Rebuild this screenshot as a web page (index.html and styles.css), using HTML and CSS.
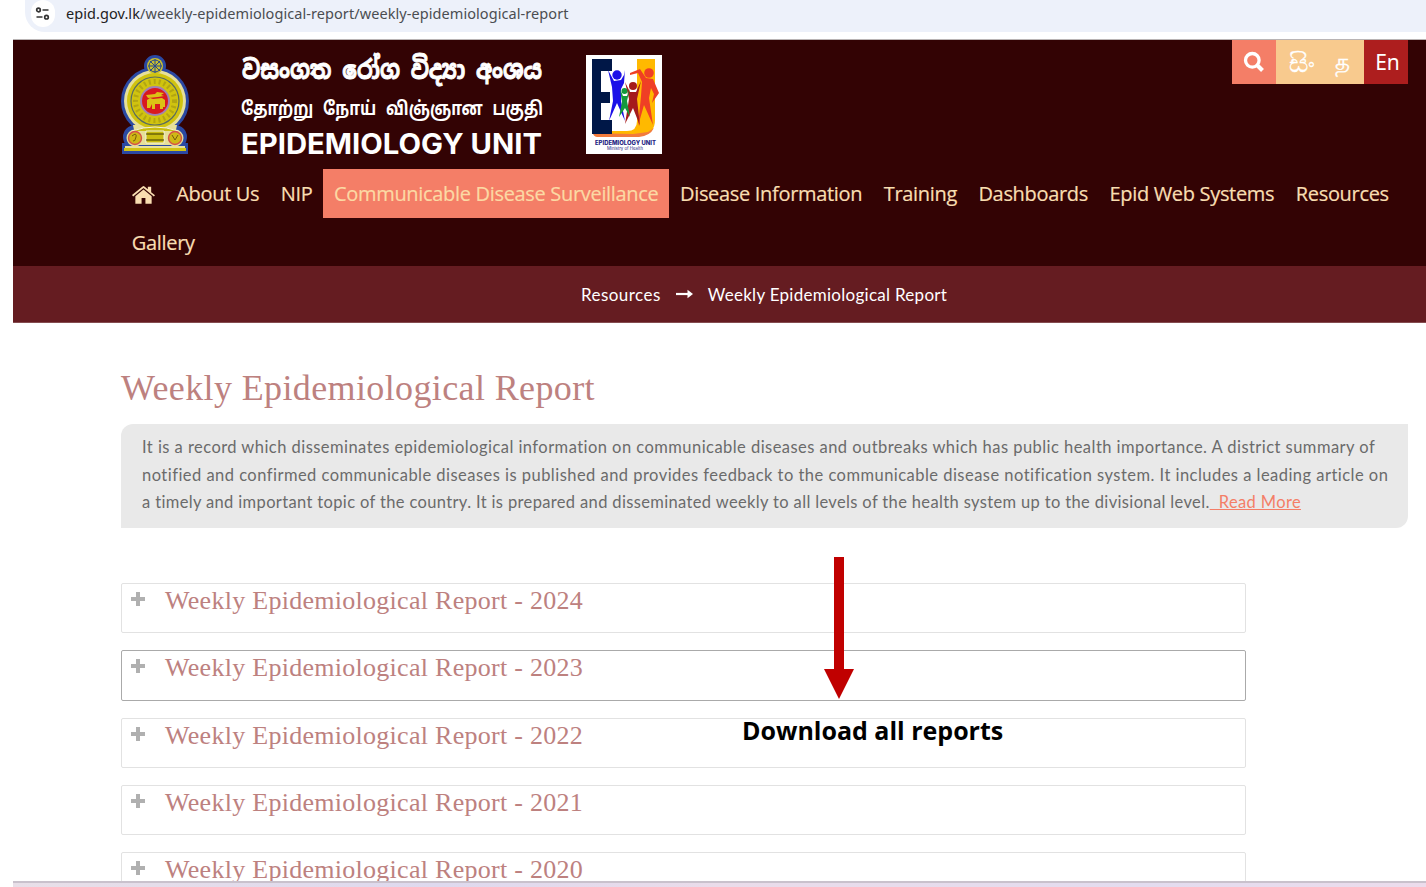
FILE: index.html
```html
<!DOCTYPE html>
<html lang="en">
<head>
<meta charset="utf-8">
<title>Weekly Epidemiological Report</title>
<link rel="stylesheet" href="styles.css">
</head>
<body>
<div class="browser-bar">
  <div class="address">
    <span class="site-info"><svg width="16" height="16" viewBox="0 0 16 16" fill="none" stroke="#333" stroke-width="1.7"><circle cx="3.500" cy="4" r="1.800"/><path d="M7.500 4h6M1.500 11h6"/><circle cx="11.500" cy="11.200" r="1.800"/></svg></span>
    <span class="url"><b>epid.gov.lk</b>/weekly-epidemiological-report/weekly-epidemiological-report</span>
  </div>
</div>
<div class="page">
  <header class="header">
    <div class="brand">
      <svg class="emblem" width="68" height="100" viewBox="0 0 68 100">
        <g fill="#2b49a3" stroke="#2b49a3" stroke-width="4"><circle cx="34" cy="11" r="9"/><circle cx="34" cy="46" r="32"/><circle cx="14" cy="82" r="10"/><circle cx="54" cy="82" r="10"/><path d="M3 90h62v7H3z"/></g>
        <g fill="#e6df9a"><circle cx="34" cy="46" r="31"/><path d="M12 70h44l-4 20H16z"/><circle cx="14" cy="83" r="8.5"/><circle cx="54" cy="83" r="8.5"/><path d="M4 91h60v4H4z"/></g>
        <circle cx="34" cy="11" r="8" fill="#c9bf2f"/><g fill="none" stroke="#274891"><circle cx="34" cy="11" r="6"/><path d="M34 4v14M27 11h14M29 6l10 10M39 6L29 16"/></g>
        <circle cx="34" cy="46" r="28" fill="#d0c30f"/>
        <g fill="none"><circle cx="34" cy="46" r="24" stroke="#596b62" stroke-width="1.2"/><circle cx="34" cy="46" r="19.500" stroke="#b3a611" stroke-width="5" stroke-dasharray="2 3"/></g>
        <circle cx="34" cy="46" r="14" fill="#d9191f" stroke="#a17fb5" stroke-width="2"/>
        <path d="M25 40l9-1 2-2 7 1-3 2 3 1-6 1-10 1zM26 45l3-2 3 1 9-1 3 2v7h-2v2h-3v-5h-5v5h-3v-5l-2 4h-3v-3z" fill="#dcc215"/>
        <path d="M11 76q23-8 46 0M25 76h18v12H25z" fill="#c9bc10" stroke="#f3f1dc"/>
        <path d="M25 79h18M25 85h18" stroke="#3c3705"/>
        <g fill="#cfb716" stroke="#d65048" stroke-width="1.4"><circle cx="14" cy="83" r="6.5"/><circle cx="54" cy="83" r="6.5"/></g>
        <path d="M11 81q5-4 4 1t-3 4M51 80l3 5 3-5" fill="none" stroke="#765d0b"/>
        <path d="M3 93h62v3H3z" fill="#d1c413"/>
      </svg>
      <svg class="brand-text" width="304" height="112" viewBox="0 0 304 112">
        <text class="sinhala" x="2" y="31" textLength="300" lengthAdjust="spacingAndGlyphs">වසංගත රෝග විද්‍යා අංශය</text>
        <text class="tamil" x="1" y="67" textLength="302" lengthAdjust="spacingAndGlyphs">தோற்று நோய் விஞ்ஞான பகுதி</text>
        <text class="english" x="1" y="106" textLength="301" lengthAdjust="spacingAndGlyphs">EPIDEMIOLOGY UNIT</text>
      </svg>
      <svg class="unit-logo" width="76" height="99" viewBox="0 0 76 99">
        <path fill="#fff" d="M0 0h76v99H0z"/>
        <path d="M51 4h18v61q0 14-14 14H11l-4-3h34q10 0 10-10z" fill="#ffb900"/>
        <path d="M7 78q0 3 4 4h42q11-1 15-9l-6 4-15 2z" fill="#f27b3c"/>
        <path fill="#001747" d="M6 4h20v12H15v21h9v11h-9v17h11v14H6z"/>
        <g fill="#1b10e8"><circle cx="31" cy="20" r="4.7"/><path d="M22 15l6 11 7-1 3-5 1-5-1 13-3 6v12l4 20-8-18-8 18 4-20-1-14z"/></g>
        <g fill="#ef3f25"><circle cx="63" cy="18" r="4.8"/><path d="M44 18l10-4 6 9 7 1 6 14-7 10 2-9-3-6-2 10 4 27-9-20-6 21 3-30 1-14-4-9-8 2z"/></g>
        <g fill="#a51b1c"><circle cx="47" cy="31" r="4"/><path d="M39 27l5 10h6l5-11-4 18 3 27-7-18-8 16 4-25z"/></g>
        <g fill="#14993c"><circle cx="38.500" cy="36" r="3"/><path d="M34 34l3 7h4l3-8-3 13 3 16-5-9-6 9 3-15z"/></g>
        <text class="logo-name" x="9" y="90" textLength="61" lengthAdjust="spacingAndGlyphs">EPIDEMIOLOGY UNIT</text>
        <text class="logo-sub" x="21" y="95" textLength="36" lengthAdjust="spacingAndGlyphs">Ministry of Health</text>
      </svg>
      <div class="tools">
        <span class="search"><svg width="22" height="22" viewBox="0 0 22 22" fill="none" stroke="#fff"><circle cx="9.300" cy="9.300" r="6.800" stroke-width="3.300"/><path d="M14 14l5.500 5.500" stroke-width="4"/></svg></span>
        <span class="lang si">සිං</span><span class="lang ta">த</span><span class="lang current">En</span>
      </div>
    </div>
    <nav class="nav">
      <a class="home"><svg width="23" height="20" viewBox="0 0 24 20"><path d="M0 10L11 1q1-1 2 0l3.500 3V1.500h3.500V7l4 3.200-1.200 1.300L12 2.700 1.200 11.500zM3.500 11.200L12 4.300l8.500 6.900V19H14v-6h-4v6H3.500z" fill="#f9deb1"/></svg></a>
      <a>About Us</a><a>NIP</a><a class="active">Communicable Disease Surveillance</a><a>Disease Information</a><a>Training</a><a>Dashboards</a><a>Epid Web Systems</a><a>Resources</a><a>Gallery</a>
    </nav>
  </header>
  <div class="crumbs"><span class="crumb-root">Resources</span><svg width="17" height="10" viewBox="0 0 17 10"><path d="M0 5h13" stroke="#fff" stroke-width="2.200"/><path d="M11.500.8L17 5l-5.500 4.200z" fill="#fff"/></svg><span class="crumb-page">Weekly Epidemiological Report</span></div>
  <main class="content">
    <h1>Weekly Epidemiological Report</h1>
    <p class="intro"><span class="l1">It is a record which disseminates epidemiological information on communicable diseases and outbreaks which has public health importance. A district summary of</span> <span class="l2">notified and confirmed communicable diseases is published and provides feedback to the communicable disease notification system. It includes a leading article on</span> <span class="l3">a timely and important topic of the country. It is prepared and disseminated weekly to all levels of the health system up to the divisional level.<a>&nbsp; Read More</a></span></p>
    <div class="reports">
      <section><i></i><h2>Weekly Epidemiological Report - 2024</h2></section>
      <section class="focused"><i></i><h2>Weekly Epidemiological Report - 2023</h2></section>
      <section><i></i><h2>Weekly Epidemiological Report - 2022</h2></section>
      <section><i></i><h2>Weekly Epidemiological Report - 2021</h2></section>
      <section><i></i><h2>Weekly Epidemiological Report - 2020</h2></section>
    </div>
  </main>
  <div class="bottom-strip"></div>
</div>
<div class="callout"><svg width="30" height="142" viewBox="0 0 30 142"><path d="M10 0h10v112h10L15 142 0 112h10z" fill="#c00000"/></svg><strong>Download all reports</strong></div>
</body>
</html>
```
FILE: styles.css
```css
* { box-sizing: border-box; }
body { margin: 0; width: 1426px; height: 887px; overflow: hidden; background: #fff; display: flex; flex-direction: column; position: relative; }
.browser-bar { height: 39px; padding-left: 25px; flex: none; }
.address { height: 32px; background: #edf1fa; border-bottom-left-radius: 20px; display: flex; align-items: flex-start; padding-left: 6px; }
.site-info { width: 24px; height: 27px; background: #fff; border-radius: 12px; display: flex; justify-content: center; padding-top: 6px; margin-right: 11px; }
.url { font: 14.500px/27px "Noto Sans", sans-serif; color: #4b4d51; white-space: nowrap; letter-spacing: .07px; }
.url b { font-weight: 400; color: #222; }
.page { margin-left: 13px; flex: 1; min-height: 0; display: flex; flex-direction: column; }
.header { background: #330304; height: 227px; flex: none; border-top: 1px solid #b9b4b4; }
.brand { height: 129px; display: flex; align-items: flex-start; padding-left: 108px; }
.emblem { margin-top: 15px; }
.brand-text { margin: 8px 0 0 51px; overflow: visible; }
.unit-logo { margin: 15px 0 0 42px; }
.brand-text text { fill: #fff; }
.brand-text .sinhala { font: 700 26px "Noto Sans Sinhala", "Noto Sans", sans-serif; stroke: #fff; stroke-width: .9px; }
.tamil { font: 700 19px "Noto Sans Tamil", "Noto Sans", sans-serif; word-spacing: 7px; }
.english { font: 700 28px Inter, sans-serif; }
.logo-name { font: 800 6px Inter, sans-serif; fill: #252482; }
.logo-sub { font: 4.500px Inter, sans-serif; fill: #252482; }
.tools { display: flex; margin-left: auto; margin-right: 18px; height: 44px; }
.tools > span { width: 44px; display: flex; align-items: center; justify-content: center; }
.tools .search { background: #f47e67; }
.tools .lang { background: #f8ca8e; color: #fff; font: 20px "Noto Sans", sans-serif; }
.tools .si { font-size: 27px; line-height: 40px; padding-left: 7px; -webkit-text-stroke: .4px #fff; }
.tools .ta { font-size: 23px; -webkit-text-stroke: .3px #fff; }
.tools .current { background: #ad1e1e; width: 44px; padding-left: 3px; font-size: 21px; }
.nav { display: flex; flex-wrap: wrap; padding: 0 0 0 108px; }
.nav a { height: 48.500px; padding: 0 10.750px; font: 20px/50px "Open Sans", sans-serif; color: #f9deb1; white-space: nowrap; letter-spacing: -.32px; -webkit-text-stroke: .2px currentColor; }
.nav .home { display: flex; align-items: center; padding-top: 4px; }
.nav .active { background: #f47e67; color: #fcd9a4; }
.crumbs { flex: none; height: 57px; background: #651c21; border-bottom: 1px solid #854c50; display: flex; align-items: center; padding-left: 568px; color: #fff; font: 17px Lato, sans-serif; white-space: nowrap; }
.crumb-root { letter-spacing: .45px; }
.crumb-page { letter-spacing: .28px; }
.crumbs svg { margin: 0 15px; }
.content { flex: 1; min-height: 0; overflow: hidden; padding-left: 108px; }
h1 { font: 400 36px/46px "Liberation Serif", serif; letter-spacing: .38px; color: #bd817f; margin: 42px 0 13px; white-space: nowrap; }
.intro { margin: 0; width: 1287px; height: 104px; padding: 10px 0 0 21px; background: #e9e9e9; border-radius: 12px 0; font: 16.500px/27.500px Lato, sans-serif; color: #6b6b6b; white-space: nowrap; }
.intro span { display: block; width: max-content; }
.l1 { letter-spacing: .455px; }
.l2 { letter-spacing: .468px; }
.l3 { letter-spacing: .355px; }
.intro a { color: #f47e67; text-decoration: underline; }
.reports { width: 1125px; margin-top: 55px; }
.reports section { height: 50.250px; margin-bottom: 17px; border: 1px solid #e2e2e2; border-radius: 2px; display: flex; padding-left: 9px; }
.reports .focused { border-color: #aaa; }
.reports i { width: 14px; height: 14px; margin: 8px 20px 0 0; background: linear-gradient(#b0b0b0, #b0b0b0) center / 4px 14px no-repeat, linear-gradient(#b0b0b0, #b0b0b0) center / 14px 4px no-repeat; }
h2 { margin: 0; font: 400 26px/34px "Liberation Serif", serif; letter-spacing: .28px; color: #bd817f; white-space: nowrap; }
.bottom-strip { flex: none; height: 6px; border-top: 2px solid #c9c1cc; background: linear-gradient(90deg, #e8dfe8, #ded9ee 30%, #eadcea 50%, #e3dcef 80%, #ecdcec); }
.callout { position: absolute; left: 742px; top: 557px; width: 262px; display: flex; flex-direction: column; }
.callout svg { margin-left: 82px; }
.callout strong { font: 700 25px/34px "Open Sans", sans-serif; color: #000; margin-top: 14px; white-space: nowrap; }
```
